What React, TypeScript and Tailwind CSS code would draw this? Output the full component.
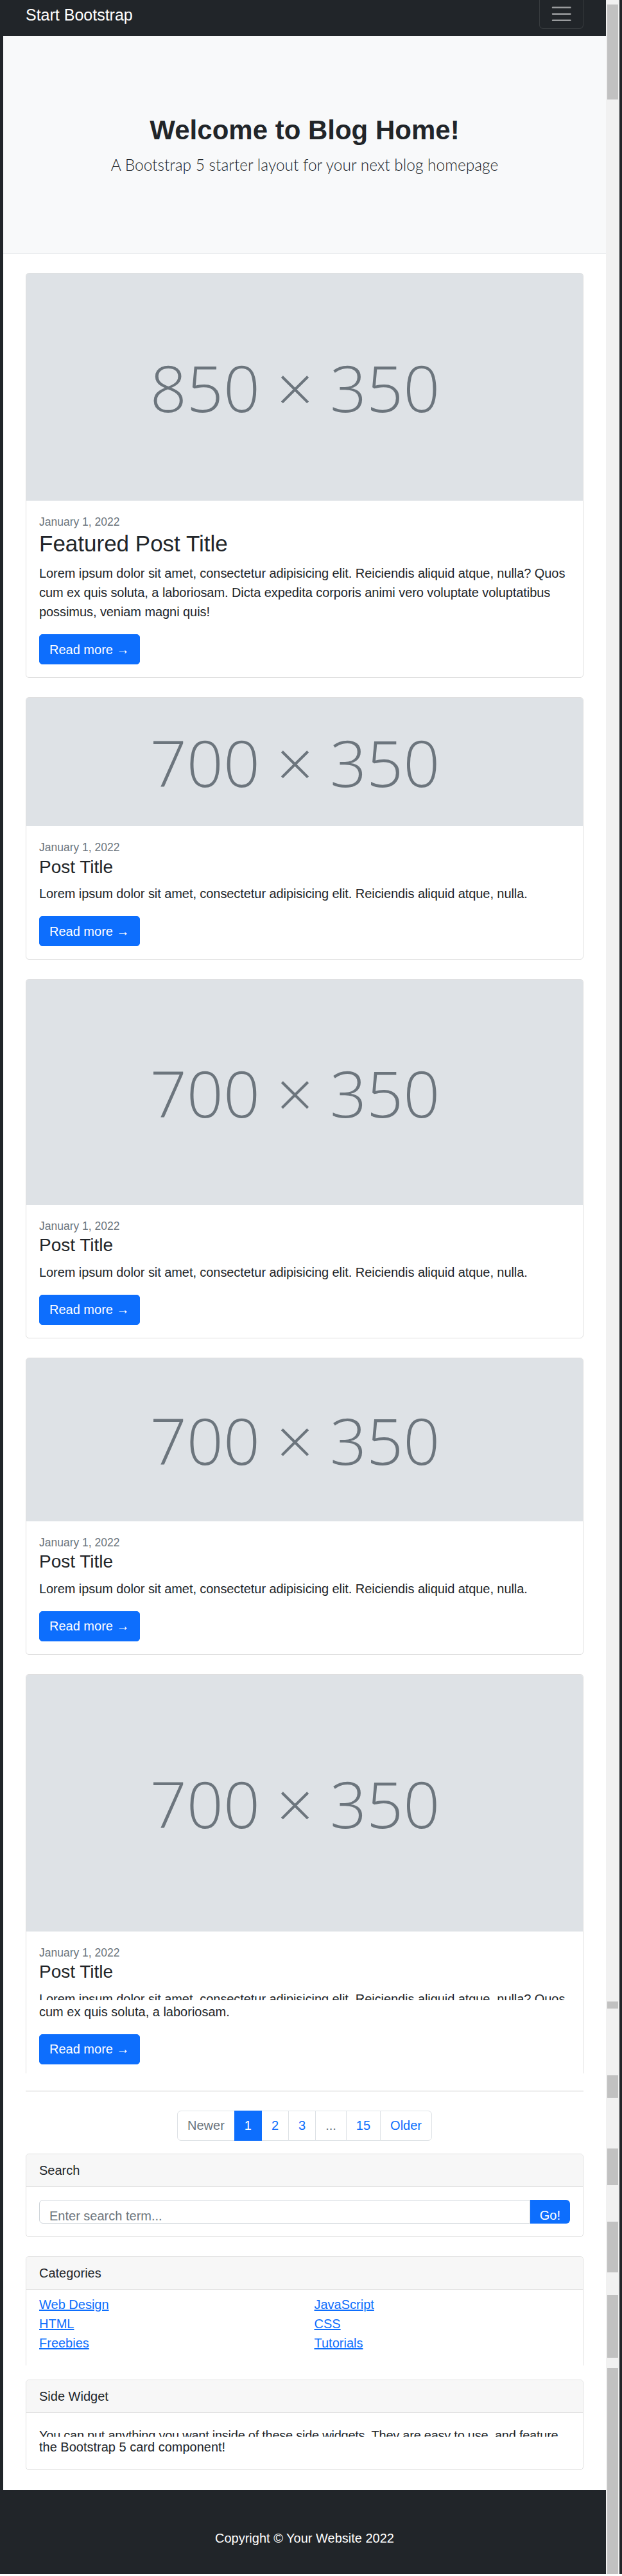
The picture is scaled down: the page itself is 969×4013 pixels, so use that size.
import React from "react";

type Post = {
  image: string;
  imageClass: string;
  title: string;
  featured?: boolean;
  text?: string;
};

const posts: Post[] = [
  {
    image: "850 × 350",
    imageClass: "h-[354px]",
    title: "Featured Post Title",
    featured: true,
    text: "Lorem ipsum dolor sit amet, consectetur adipisicing elit. Reiciendis aliquid atque, nulla? Quos cum ex quis soluta, a laboriosam. Dicta expedita corporis animi vero voluptate voluptatibus possimus, veniam magni quis!",
  },
  {
    image: "700 × 350",
    imageClass: "h-[200px]",
    title: "Post Title",
    text: "Lorem ipsum dolor sit amet, consectetur adipisicing elit. Reiciendis aliquid atque, nulla.",
  },
  {
    image: "700 × 350",
    imageClass: "h-[351px]",
    title: "Post Title",
    text: "Lorem ipsum dolor sit amet, consectetur adipisicing elit. Reiciendis aliquid atque, nulla.",
  },
  {
    image: "700 × 350",
    imageClass: "h-[254px]",
    title: "Post Title",
    text: "Lorem ipsum dolor sit amet, consectetur adipisicing elit. Reiciendis aliquid atque, nulla.",
  },
];

const categories = [
  ["Web Design", "HTML", "Freebies"],
  ["JavaScript", "CSS", "Tutorials"],
];

function ReadMore() {
  return (
    <a
      href="#!"
      className="inline-block bg-[#0d6efd] border border-[#0d6efd] text-white text-[20px] leading-[30px] px-[15px] py-[7.5px] rounded-[5px]"
    >
      Read more →
    </a>
  );
}

function ImagePlaceholder({ label, className }: { label: string; className: string }) {
  return (
    <div className={`${className} bg-[#dee2e6] flex items-center justify-center pr-[30px]`}>
      <span className="font-['Open_Sans',sans-serif] font-light text-[100px] leading-[100px] text-[#6c757d] whitespace-nowrap">
        {label}
      </span>
    </div>
  );
}

function PostCard({ post }: { post: Post }) {
  return (
    <div className="border border-[#dfdfdf] rounded-[5px] overflow-hidden bg-white mb-[30px]">
      <ImagePlaceholder label={post.image} className={post.imageClass} />
      <div className="p-[20px]">
        <div className="text-[17.5px] leading-[26.25px] text-[#6c757d]">January 1, 2022</div>
        {post.featured ? (
          <h2 className="text-[35px] leading-[42px] font-medium mb-[10px]">{post.title}</h2>
        ) : (
          <h2 className="text-[28px] leading-[33.6px] font-medium mb-[10px]">{post.title}</h2>
        )}
        <p className="text-[20px] leading-[30px] tracking-[-0.07px] mb-[20px]">{post.text}</p>
        <ReadMore />
      </div>
    </div>
  );
}

// last card is cut off by the page capture, first text line only half visible
function CutPostCard() {
  return (
    <div className="border border-b-0 border-[#dfdfdf] rounded-t-[5px] overflow-hidden bg-white">
      <ImagePlaceholder label="700 × 350" className="h-[400px]" />
      <div className="px-[20px] pt-[20px] pb-[14px]">
        <div className="text-[17.5px] leading-[26.25px] text-[#6c757d]">January 1, 2022</div>
        <h2 className="text-[28px] leading-[33.6px] font-medium mb-[10px]">Post Title</h2>
        <div className="text-[20px] leading-[30px] mb-[20px]">
          <div className="h-[17px] overflow-hidden whitespace-nowrap tracking-[-0.07px]">
            Lorem ipsum dolor sit amet, consectetur adipisicing elit. Reiciendis aliquid atque, nulla? Quos
          </div>
          <div className="mt-[3px]">cum ex quis soluta, a laboriosam.</div>
        </div>
        <ReadMore />
      </div>
    </div>
  );
}

function Pagination() {
  const items = [
    { label: "Newer", state: "disabled" },
    { label: "1", state: "active" },
    { label: "2", state: "" },
    { label: "3", state: "" },
    { label: "...", state: "disabled" },
    { label: "15", state: "" },
    { label: "Older", state: "" },
  ];
  return (
    <nav aria-label="Pagination">
      <hr className="border-0 border-t border-[#c8c9ca] mt-[27px]" />
      <ul className="flex justify-center mt-[30px] mb-[20px]">
        {items.map((item, i) => (
          <li key={item.label}>
            <a
              href="#!"
              className={`block text-[20px] leading-[30px] px-[15px] py-[7.5px] border ${
                i === 0 ? "rounded-l-[6px]" : "-ml-px"
              } ${i === items.length - 1 ? "rounded-r-[6px]" : ""} ${
                item.state === "active"
                  ? "relative bg-[#0d6efd] border-[#0d6efd] text-white"
                  : item.state === "disabled"
                  ? "bg-white border-[#dee2e6] text-[#6c757d]"
                  : "bg-white border-[#dee2e6] text-[#0d6efd]"
              }`}
            >
              {item.label}
            </a>
          </li>
        ))}
      </ul>
    </nav>
  );
}

function WidgetHeader({ children }: { children: React.ReactNode }) {
  return (
    <div className="bg-[#f7f7f7] border-b border-[#dfdfdf] px-[20px] py-[10px] text-[20px] leading-[30px]">
      {children}
    </div>
  );
}

function Scrollbar() {
  return (
    <div className="w-[21px] shrink-0 bg-[#f1f1f1] flex flex-col">
      <div className="h-[7px] shrink-0" />
      <div className="h-[148px] shrink-0 mx-[2px] bg-[#c1c1c1]" />
      <div className="h-[2963px] shrink-0" />
      <div className="h-[11px] shrink-0 mx-[2px] bg-[#c1c1c1]" />
      <div className="h-[104px] shrink-0" />
      <div className="h-[35px] shrink-0 mx-[2px] bg-[#c1c1c1]" />
      <div className="h-[79px] shrink-0" />
      <div className="h-[57px] shrink-0 mx-[2px] bg-[#c1c1c1]" />
      <div className="h-[57px] shrink-0" />
      <div className="h-[79px] shrink-0 mx-[2px] bg-[#c1c1c1]" />
      <div className="h-[35px] shrink-0" />
      <div className="h-[98px] shrink-0 mx-[2px] bg-[#c1c1c1]" />
      <div className="h-[16px] shrink-0" />
      <div className="flex-1 mx-[2px] bg-[#c1c1c1]" />
    </div>
  );
}

export default function App() {
  return (
    <div className="flex bg-[#212529] pl-[5px] pr-[4px] font-['Liberation_Sans',Arial,sans-serif] text-[#212529]">
      <div className="w-[939px] shrink-0 bg-white flex flex-col">
        {/* Navbar */}
        <header className="h-[56px] bg-[#212529] px-[35px] flex items-start justify-between">
          <a href="#!" className="mt-[8px] text-[25px] leading-[30px] text-white">
            Start Bootstrap
          </a>
          <button className="px-[15px] pt-[2.5px] pb-[4px] border border-t-0 border-white/10 rounded-b-[6px]">
            <svg width="37.5" height="37.5" viewBox="0 0 30 30" className="block">
              <path
                d="M4 7h22M4 15h22M4 23h22"
                stroke="rgba(255,255,255,0.55)"
                strokeWidth="2"
                strokeLinecap="round"
              />
            </svg>
          </button>
        </header>

        {/* Page header */}
        <section className="h-[339px] bg-[#f8f9fa] border-b border-[#dee2e6] flex flex-col items-center justify-center pt-[4px] text-center">
          <h1 className="text-[42px] leading-[50px] font-bold mb-[10px]">Welcome to Blog Home!</h1>
          <p className="font-['Lato',sans-serif] font-light text-[24.5px] leading-[37.5px]">
            A Bootstrap 5 starter layout for your next blog homepage
          </p>
        </section>

        <main className="px-[35px] pt-[30px]">
          {posts.map((post, i) => (
            <PostCard key={i} post={post} />
          ))}
          <CutPostCard />
          <Pagination />

          {/* Search widget */}
          <div className="border border-[#dfdfdf] rounded-[5px] overflow-hidden mb-[30px]">
            <WidgetHeader>Search</WidgetHeader>
            <div className="p-[20px]">
              <div className="flex h-[37px]">
                <input
                  type="text"
                  placeholder="Enter search term..."
                  className="flex-1 min-w-0 border border-[#ced4da] rounded-l-[6px] px-[15px] pt-[14px] pb-0 text-[20px] leading-[21px] placeholder:text-[#6c757d] outline-none"
                />
                <button className="bg-[#0d6efd] text-white text-[20px] leading-[21px] px-[15px] pt-[14px] rounded-r-[6px] flex items-start">
                  Go!
                </button>
              </div>
            </div>
          </div>

          {/* Categories widget, bottom cut off */}
          <div className="border border-b-0 border-[#dfdfdf] rounded-t-[5px] overflow-hidden mb-[22px]">
            <WidgetHeader>Categories</WidgetHeader>
            <div className="px-[20px] pt-[8px] pb-[20px] grid grid-cols-2 gap-x-[30px]">
              {categories.map((col, i) => (
                <ul key={i}>
                  {col.map((c) => (
                    <li key={c} className="text-[20px] leading-[30px]">
                      <a href="#!" className="text-[#0d6efd] underline">
                        {c}
                      </a>
                    </li>
                  ))}
                </ul>
              ))}
            </div>
          </div>

          {/* Side widget */}
          <div className="border border-[#dfdfdf] rounded-[5px] overflow-hidden mb-[31px]">
            <WidgetHeader>Side Widget</WidgetHeader>
            <div className="p-[20px] text-[20px] leading-[30px]">
              <div className="h-[17px] overflow-hidden whitespace-nowrap tracking-[-0.25px]">
                You can put anything you want inside of these side widgets. They are easy to use, and feature
              </div>
              <div className="mt-[1px]">the Bootstrap 5 card component!</div>
            </div>
          </div>
        </main>

        {/* Footer */}
        <footer className="h-[131px] bg-[#212529] pt-[60px]">
          <p className="text-center text-white text-[20px] leading-[30px]">Copyright © Your Website 2022</p>
        </footer>
      </div>
      <Scrollbar />
    </div>
  );
}
